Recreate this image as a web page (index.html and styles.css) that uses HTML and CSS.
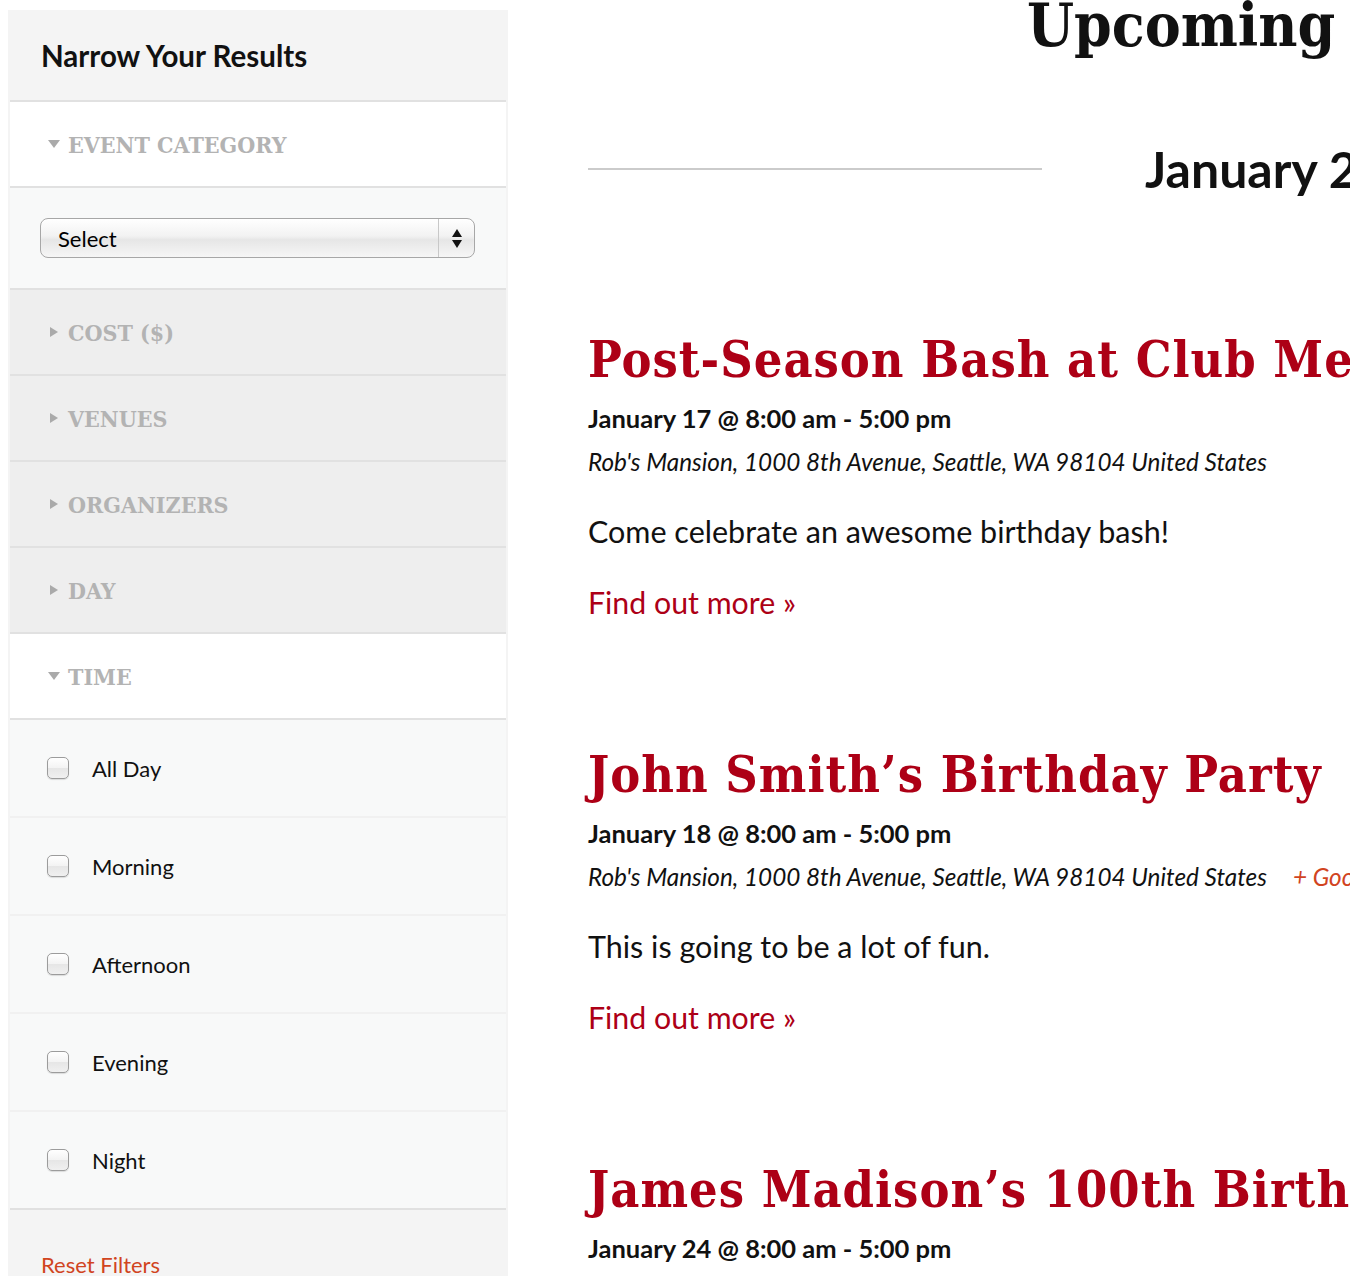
FILE: index.html
```html
<!DOCTYPE html>
<html>
<head>
<meta charset="utf-8">
<link rel="stylesheet" href="styles.css">
</head>
<body>
<div class="page">
  <aside class="sidebar">
    <div class="sb-title">Narrow Your Results</div>
    <div class="sb-head open"><span class="tri-down"></span>Event Category</div>
    <div class="sb-select-area">
      <div class="select">
        <span class="select-label">Select</span>
        <span class="select-arrows"><span class="arr-up"></span><span class="arr-down"></span></span>
      </div>
    </div>
    <div class="sb-head closed"><span class="tri-right"></span>Cost ($)</div>
    <div class="sb-head closed"><span class="tri-right"></span>Venues</div>
    <div class="sb-head closed"><span class="tri-right"></span>Organizers</div>
    <div class="sb-head closed"><span class="tri-right"></span>Day</div>
    <div class="sb-head open"><span class="tri-down"></span>Time</div>
    <ul class="checks">
      <li><span class="cb"></span>All Day</li>
      <li><span class="cb"></span>Morning</li>
      <li><span class="cb"></span>Afternoon</li>
      <li><span class="cb"></span>Evening</li>
      <li><span class="cb"></span>Night</li>
    </ul>
    <div class="sb-footer"><a class="reset">Reset Filters</a></div>
  </aside>
  <main class="main">
    <h1 class="page-title">Upcoming Events</h1>
    <div class="date-sep"><span class="sep-line"></span><h2 class="sep-text">January 2016</h2></div>
    <article class="event">
      <h3 class="ev-title">Post-Season Bash at Club Metro</h3>
      <div class="ev-date">January 17 @ 8:00 am - 5:00 pm</div>
      <div class="ev-venue"><span>Rob's Mansion, 1000 8th Avenue, Seattle, WA 98104 United States</span></div>
      <p class="ev-desc">Come celebrate an awesome birthday bash!</p>
      <a class="ev-more">Find out more »</a>
    </article>
    <article class="event">
      <h3 class="ev-title">John Smith’s Birthday Party</h3>
      <div class="ev-date">January 18 @ 8:00 am - 5:00 pm</div>
      <div class="ev-venue"><span>Rob's Mansion, 1000 8th Avenue, Seattle, WA 98104 United States</span><a class="gmap">+ Google Map</a></div>
      <p class="ev-desc">This is going to be a lot of fun.</p>
      <a class="ev-more">Find out more »</a>
    </article>
    <article class="event">
      <h3 class="ev-title">James Madison’s 100th Birthday</h3>
      <div class="ev-date">January 24 @ 8:00 am - 5:00 pm</div>
    </article>
  </main>
</div>
</body>
</html>
```
FILE: styles.css
```css
html, body {
  margin: 0;
  padding: 0;
  overflow: hidden;
  background: #fff;
}
body {
  width: 1350px;
  height: 1276px;
  font-family: Lato, "Noto Sans", sans-serif;
  color: #111;
}
.page {
  display: flex;
  align-items: flex-start;
  padding: 10px 0 0 8px;
  width: 2200px;
}
.sidebar {
  width: 496px;
  flex: none;
  background: #f4f4f4;
  padding: 0 2px;
  height: 1300px;
}
.sb-title {
  height: 90px;
  display: flex;
  align-items: center;
  padding-left: 31px;
  font-size: 29.5px;
  font-weight: 700;
  color: #111;
}
.sb-head {
  height: 84px;
  border-top: 2px solid #e1e1e1;
  display: flex;
  align-items: center;
  padding-left: 38px;
  font-family: "DejaVu Serif", serif;
  font-stretch: condensed;
  font-weight: 700;
  font-size: 23px;
  text-transform: uppercase;
  color: #b3b3b3;
}
.sb-head.open { background: #fff; }
.sb-head.closed { background: #eeeeee; }
.tri-down {
  width: 0; height: 0;
  border-left: 6px solid transparent;
  border-right: 6px solid transparent;
  border-top: 8px solid #aaa;
  margin-right: 8px;
}
.tri-right {
  width: 0; height: 0;
  border-top: 5px solid transparent;
  border-bottom: 5px solid transparent;
  border-left: 8px solid #aaa;
  margin-left: 2px;
  margin-right: 10px;
}
.sb-select-area {
  height: 100px;
  border-top: 2px solid #e1e1e1;
  background: #f8f9f9;
  display: flex;
  align-items: center;
  padding-left: 30px;
  padding-right: 31px;
}
.select {
  flex: 1;
  height: 38px;
  border: 1px solid #a7a7a7;
  border-radius: 8px;
  background: linear-gradient(#ffffff, #f2f2f2 45%, #e6e6e6 55%, #f6f6f6);
  box-shadow: inset 0 1px 1px #fff;
  display: flex;
  align-items: stretch;
}
.select-label {
  flex: 1;
  display: flex;
  align-items: center;
  padding-left: 17px;
  font-size: 22px;
  color: #000;
}
.select-arrows {
  width: 35px;
  border-left: 1px solid #c8c8c8;
  display: flex;
  flex-direction: column;
  align-items: center;
  justify-content: center;
  gap: 3px;
}
.arr-up {
  width: 0; height: 0;
  border-left: 5px solid transparent;
  border-right: 5px solid transparent;
  border-bottom: 8px solid #111;
}
.arr-down {
  width: 0; height: 0;
  border-left: 5px solid transparent;
  border-right: 5px solid transparent;
  border-top: 8px solid #111;
}
.checks {
  list-style: none;
  margin: 0;
  padding: 0;
  border-top: 2px solid #e1e1e1;
  background: #f8f9f9;
}
.checks li {
  height: 96px;
  border-bottom: 2px solid #f1f1f1;
  display: flex;
  align-items: center;
  padding-left: 37px;
  font-size: 22px;
  color: #111;
}
.checks li:last-child { border-bottom-color: #e1e1e1; }
.cb {
  width: 20px;
  height: 20px;
  border: 1px solid #9c9c9c;
  border-radius: 5px;
  background: linear-gradient(#ffffff, #f3f3f3 50%, #e6e6e6 52%, #f0f0f0);
  box-shadow: 0 1px 1px rgba(0,0,0,0.12);
  margin-right: 23px;
}
.sb-footer {
  padding: 41px 0 0 31px;
}
.reset {
  font-size: 22px;
  color: #d1441f;
}
.main {
  margin-left: 80px;
  width: 1500px;
}
.page-title {
  margin: -21px 0 0 439px;
  font-family: "DejaVu Serif", serif;
  font-stretch: condensed;
  font-size: 60px;
  line-height: 72px;
  font-weight: 700;
  color: #111;
  white-space: nowrap;
}
.date-sep {
  display: flex;
  align-items: center;
  margin-top: 80px;
}
.sep-line {
  width: 454px;
  height: 2px;
  background: #cbcbcb;
  margin-right: 103px;
}
.sep-text {
  margin: 0;
  font-size: 50px;
  font-weight: 700;
  line-height: 56px;
  white-space: nowrap;
}
.event {
  display: flex;
  flex-direction: column;
  align-items: flex-start;
  white-space: nowrap;
}
.ev-title {
  margin: 131px 0 0 0;
  font-family: "DejaVu Serif", serif;
  font-stretch: condensed;
  font-size: 50px;
  letter-spacing: 1px;
  line-height: 64px;
  font-weight: 700;
  color: #ad0016;
}
.event + .event .ev-title { margin-top: 121px; }
.ev-date {
  margin-top: 10px;
  font-size: 25.5px;
  line-height: 32px;
  font-weight: 700;
}
.ev-venue {
  margin-top: 12px;
  font-size: 24.3px;
  line-height: 32px;
  font-style: italic;
  display: flex;
  gap: 26px;
}
.gmap {
  color: #d1441f;
}
.ev-desc {
  margin: 33px 0 0 0;
  font-size: 30.5px;
  line-height: 40px;
}
.ev-more {
  margin-top: 31px;
  font-size: 30.3px;
  line-height: 40px;
  color: #ad0016;
}
```
